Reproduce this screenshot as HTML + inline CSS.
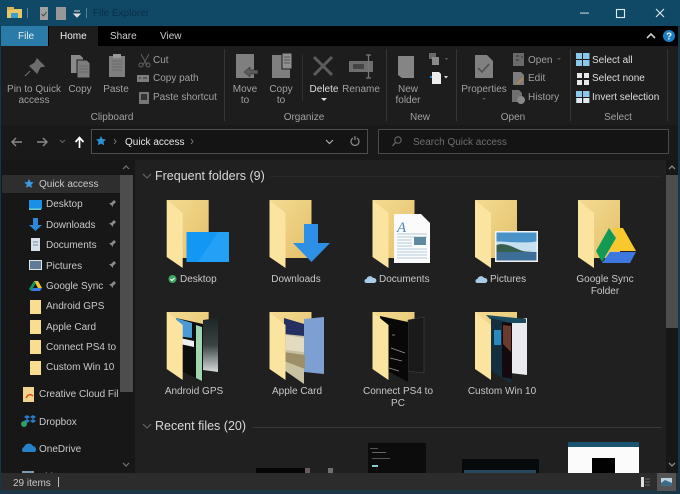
<!DOCTYPE html>
<html><head><meta charset="utf-8"><style>
html,body{margin:0;padding:0;width:680px;height:494px;overflow:hidden;background:#202020}
body{position:relative;font-family:"Liberation Sans",sans-serif;font-size:10px;color:#c8c8c8}
#all{position:absolute;left:0;top:0;width:680px;height:494px;overflow:hidden;filter:blur(.35px)}
.t{position:absolute;white-space:nowrap;line-height:12px;margin-top:1px}
.c{position:absolute;text-align:center;line-height:12px;margin-top:1px}
.h{margin-top:0}
.d{color:#a0a0a0}.w{color:#e8e8e8}
svg{position:absolute;left:0;top:0}
</style></head><body><div id="all">
<svg width="680" height="494" viewBox="0 0 680 494" xmlns="http://www.w3.org/2000/svg">
<defs>
<linearGradient id="bk" x1="0" y1="0" x2="1" y2="1"><stop offset="0" stop-color="#f4db92"/><stop offset="1" stop-color="#e3c06a"/></linearGradient>
<linearGradient id="g1" x1="0" y1="0" x2="0" y2="1"><stop offset="0" stop-color="#1d2626"/><stop offset=".5" stop-color="#3a4242"/><stop offset="1" stop-color="#d6dcdc"/></linearGradient>
<g id="fd"><path d="M0 0H42V58H16Z" fill="url(#bk)"/></g>
<g id="fl"><path d="M0 0L16 13V68L0 57Z" fill="#fbe4a0"/></g>
</defs>
<!-- frames -->
<rect width="680" height="494" fill="#202020"/>
<rect width="680" height="26" fill="#0f4966"/>
<rect y="26" width="680" height="20" fill="#000"/>
<rect x="1" y="26" width="47" height="20" fill="#2a7ba8"/>
<rect x="49" y="26" width="49" height="20" fill="#1d1d1d"/>
<rect y="46" width="680" height="79" fill="#1d1d1d"/>
<rect y="125" width="680" height="35" fill="#191919"/>
<rect y="160" width="135" height="313" fill="#171717"/>
<rect x="135" y="160" width="545" height="313" fill="#202020"/>
<rect y="473" width="680" height="17" fill="#2c2c2c"/>
<rect y="490" width="680" height="4" fill="#1c3644"/>
<rect x="0" y="26" width="1" height="468" fill="#12384c"/>
<rect x="678" y="26" width="2" height="468" fill="#12384c"/>
<!-- title icons -->
<path d="M7 9h15v9H7z" fill="#e9c667"/><path d="M7 7h7v3H7z" fill="#d9b45a"/><path d="M11 13h7v5h-7z" fill="#3aa0c8"/>
<rect x="27" y="8" width="1" height="10" fill="#5a8198"/>
<rect x="40" y="7" width="8" height="13" fill="#a0a0a0"/><path d="M41.500 14l2 2 3-4" stroke="#444" fill="none"/>
<rect x="56" y="7" width="10" height="13" fill="#989898"/>
<path d="M74 11h6M74 14l3 3 3-3z" stroke="#ddd" fill="#ddd"/>
<rect x="86" y="8" width="1" height="10" fill="#5a8198"/>
<!-- window buttons -->
<rect x="580" y="12.500" width="9" height="1.200" fill="#b5c6d0"/>
<rect x="616.500" y="9.500" width="8" height="8" fill="none" stroke="#e2e8ec" stroke-width="1.100"/>
<path d="M656 9l8 8M664 9l-8 8" stroke="#e2e8ec" stroke-width="1.100"/>
<path d="M647 38l4-4 4 4" stroke="#ccc" stroke-width="1.600" fill="none"/>
<circle cx="669" cy="36" r="6" fill="#1e7ec4"/>
<text x="669" y="39.500" text-anchor="middle" font-family="Liberation Sans" font-size="10" font-weight="bold" fill="#e8f2fa">?</text>
<!-- ribbon separators -->
<g fill="#353535"><rect x="224" y="49" width="1" height="72"/><rect x="386" y="49" width="1" height="72"/><rect x="456" y="49" width="1" height="72"/><rect x="570" y="49" width="1" height="72"/><rect x="667" y="49" width="1" height="72"/><rect x="302" y="55" width="1" height="46" fill="#303030"/></g>
<!-- pin -->
<path d="M37 59l7 7-4 1-3 6-7-7 5-3zM30 71l-5 5" fill="#6d6d6d" stroke="#6d6d6d" stroke-width="1.200"/>
<!-- copy -->
<path d="M71 55h9l3 3v15H71z" fill="#8a8a8a"/><path d="M77 60h10l3 3v15H77z" fill="#7d7d7d" stroke="#1d1d1d"/><path d="M79 66h9M79 69h9M79 72h9" stroke="#666"/>
<!-- paste -->
<rect x="109" y="56" width="16" height="21" fill="#7f7f7f"/><rect x="113" y="54" width="8" height="4" fill="#999"/><path d="M112 61h10M112 64h10M112 67h10M112 70h10" stroke="#6a6a6a"/>
<!-- cut etc -->
<path d="M141 54l6 11M149 54l-6 11" stroke="#5d5d5d" stroke-width="1.100"/><circle cx="141" cy="65" r="2" fill="none" stroke="#666"/><circle cx="148" cy="65" r="2" fill="none" stroke="#666"/>
<rect x="137" y="75" width="12" height="7" fill="#7c7c7c"/><path d="M139 78h2M143 78h4" stroke="#333"/>
<rect x="139" y="92" width="10" height="12" fill="#777"/><rect x="141" y="94" width="6" height="6" fill="#333"/>
<!-- move -->
<rect x="236" y="54" width="18" height="24" fill="#7f7f7f"/><path d="M258 70h-8v-3l-6 5 6 5v-3h8z" fill="#5c5c5c" stroke="#1d1d1d" stroke-width=".5"/>
<!-- copy to -->
<rect x="272" y="55" width="18" height="23" fill="#7f7f7f"/><path d="M282 53h10v16h-10z" fill="#909090" stroke="#1d1d1d"/><path d="M284 57h6M284 60h6M284 63h6" stroke="#555"/>
<!-- delete -->
<path d="M314 57l18 18M332 57l-18 18" stroke="#5c5c5c" stroke-width="3"/>
<path d="M321 98h6l-3 3z" fill="#ddd"/>
<!-- rename -->
<rect x="349" y="61" width="24" height="11" fill="#6e6e6e"/><rect x="353" y="64" width="11" height="5" fill="#444"/><path d="M366 55h5M368.500 55v23M366 78h5" stroke="#777" stroke-width="1.300"/>
<!-- new folder -->
<path d="M398 56h16v22h-12l-4-3z" fill="#858585"/>
<path d="M429 53h7v6h-7z" fill="#6a6a6a"/><path d="M432 57h7v8h-7z" fill="#8a8a8a"/><path d="M445 58h3l-1.500 2z" fill="#666"/>
<path d="M432 72h7l2 2v10h-9z" fill="#eee"/><path d="M430 76h2v2h-2z" fill="#2a88c8"/><path d="M444 76h4l-2 2.500z" fill="#ddd"/>
<!-- properties -->
<path d="M475 55h12l6 6v17h-18z" fill="#808080"/><path d="M478 68l4 4 7-8" stroke="#505050" stroke-width="1.600" fill="none"/><path d="M482 98h4l-2 2z" fill="#555"/>
<!-- open/edit/history -->
<rect x="513" y="53" width="11" height="13" fill="#6a6a6a"/><path d="M516 56h3M516 60h3M521 57h2" stroke="#333"/>
<path d="M513 72h8l3 3v10h-11z" fill="#7d7d7d"/><path d="M517 84l6-6" stroke="#c0883c" stroke-width="1.300"/>
<path d="M512 90h7l3 3v9h-10z" fill="#6f6f6f"/><circle cx="521" cy="100" r="4" fill="#888"/>
<path d="M557 58h4l-2 2z" fill="#555"/>
<!-- select -->
<g fill="#8cc8ea"><rect x="576" y="53" width="6" height="6"/><rect x="583" y="53" width="6.500" height="6"/><rect x="576" y="60" width="6" height="6"/><rect x="583" y="60" width="6.500" height="6"/></g>
<g fill="#e8e8e8"><rect x="577" y="73" width="5" height="5"/><rect x="584" y="73" width="5" height="5"/><rect x="577" y="80" width="5" height="5"/><rect x="584" y="80" width="5" height="5"/></g>
<g fill="#8cc8ea"><rect x="583" y="91" width="6.500" height="6"/><rect x="576" y="91" width="6" height="6"/><rect x="583" y="98" width="6.500" height="5" /><rect x="576" y="98" width="6" height="5"/></g>
<rect x="577" y="98" width="5" height="5" fill="#e8e8e8"/><rect x="584" y="98" width="5" height="5" fill="#e8e8e8"/>
<!-- nav -->
<g fill="none" stroke="#8a8a8a" stroke-width="1.400"><path d="M22 142H12M16 138l-4 4 4 4"/><path d="M37 142h10M43 138l4 4-4 4"/></g>
<path d="M60 140l2.500 2.500L65 140" fill="none" stroke="#666"/>
<path d="M79.500 148v-10M75.500 142l4-4.500 4 4.500" fill="none" stroke="#fff" stroke-width="1.700"/>
<rect x="91.500" y="129.500" width="276" height="24" fill="#141414" stroke="#4e4e4e"/>
<path d="M101 136l1.500 3 3.500.5-2.500 2.300.6 3.500-3.100-1.700-3.100 1.700.6-3.500-2.500-2.300 3.500-.5z" fill="#2f8fd0"/>
<path d="M114 139l2 2.500-2 2.500M191 139l2 2.500-2 2.500" fill="none" stroke="#777"/>
<path d="M326 140l3.500 3.500 3.500-3.500" fill="none" stroke="#aaa" stroke-width="1.200"/>
<path d="M353 138a4 4 0 1 0 4 0M355 136v4" fill="none" stroke="#8a8a8a" stroke-width="1.200"/>
<rect x="378.500" y="129.500" width="290" height="24" fill="#141414" stroke="#4a4a4a"/>
<circle cx="398" cy="140" r="3.200" fill="none" stroke="#666" stroke-width="1.100"/><path d="M395.500 142.500l-3 3.500" stroke="#666" stroke-width="1.300"/>
<!-- nav pane -->
<rect x="2" y="175" width="118" height="18" fill="#2e2e2e"/>
<rect x="120" y="175" width="13" height="217" fill="#4d4d4d"/>
<path d="M123 169l3-3 3 3M123 463l3 3 3-3" fill="none" stroke="#777" stroke-width="1.200"/>
<path d="M29 179l1.400 3 3.300.4-2.400 2.200.6 3.300-2.900-1.600-2.900 1.600.6-3.300-2.400-2.200 3.300-.4z" fill="#3a9ae0"/>
<rect x="29" y="200" width="13" height="9" fill="#1a8fe8"/><rect x="29" y="208.500" width="12" height="1.500" fill="#7cc"/>
<path d="M33 218h5v7h4l-6.500 6-6.500-6h4z" fill="#2f86d8"/>
<rect x="31" y="238" width="9" height="13" fill="#d8dfe6"/><path d="M33 242h5M33 245h5" stroke="#6b93b4"/>
<rect x="29" y="260" width="13" height="10" fill="#dfe4e8"/><rect x="30" y="261" width="11" height="8" fill="#5f7d98"/>
<path d="M34 281h4l4 7h-4z" fill="#f4c430"/><path d="M34 281l-5 8 2 2 5-8z" fill="#14965a"/><path d="M31 291h9l2-3h-9z" fill="#3b7ae0"/>
<g fill="#f8dd92"><rect x="30" y="300" width="11" height="14"/><rect x="30" y="320" width="11" height="14"/><rect x="30" y="340" width="11" height="14"/><rect x="30" y="361" width="11" height="14"/></g>
<g fill="#8a8a8a"><path d="M114 200l-3 3-2 0 4 4 0-2 3-3zM109 207l-1 1"/><path d="M114 220l-3 3-2 0 4 4 0-2 3-3z"/><path d="M114 240l-3 3-2 0 4 4 0-2 3-3z"/><path d="M114 261l-3 3-2 0 4 4 0-2 3-3z"/><path d="M114 281l-3 3-2 0 4 4 0-2 3-3z"/></g>
<rect x="23" y="387" width="11" height="15" fill="#f0d490"/><path d="M26 398c2-4 5-4 7-2" stroke="#d8501c" stroke-width="1.500" fill="none"/>
<path d="M24 417l3-2 3 2-3 2zM30 417l3-2 3 2-3 2zM24 421l3-2 3 2-3 2zM30 421l3-2 3 2-3 2z" fill="#2a7cc8"/><circle cx="24" cy="424" r="3" fill="#30a060"/>
<path d="M23 452a3 3 0 0 1 1-5 5 5 0 0 1 9-1 3.500 3.500 0 0 1 2 6z" fill="#2a80c4"/>
<rect x="22" y="471" width="12" height="2" fill="#7a9ab0"/>
<!-- main scrollbar -->
<rect x="666" y="160" width="12" height="313" fill="#171717"/>
<rect x="666" y="175" width="12" height="153" fill="#4d4d4d"/>
<path d="M669 169l3-3 3 3M669 463l3 3 3-3" fill="none" stroke="#888" stroke-width="1.300"/>
<!-- group headers -->
<path d="M143 174l4 4 4-4M143 424l4 4 4-4" fill="none" stroke="#666" stroke-width="1.100"/>
<rect x="270" y="176" width="392" height="1" fill="#2a2a2a"/>
<rect x="252" y="427" width="410" height="1" fill="#383838"/>
<!-- row 1 -->
<g transform="translate(166.700 200)"><use href="#fd"/></g>
<path d="M186.500 232H229V262H186.500z" fill="#1397f5"/><path d="M198 262l20-30h11v30z" fill="#25a0f7"/>
<g transform="translate(166.700 200)"><use href="#fl"/></g>
<g transform="translate(269.500 200)"><use href="#fd"/></g>
<path d="M304 224h14v19h12l-18.500 19-18.500-19h11z" fill="#2e8fe6"/>
<g transform="translate(269.500 200)"><use href="#fl"/></g>
<g transform="translate(372.500 200)"><use href="#fd"/></g>
<path d="M394 214h27l9 9v40h-36z" fill="#fbfbfb"/>
<path d="M397 234h30M397 237h30M397 240h15M397 243h15M397 246h15M397 249h30M397 252h30M397 255h30M397 258h30" stroke="#b5c8da"/>
<rect x="414" y="237" width="12" height="8" fill="#5f8aa0"/>
<text x="397" y="232" font-family="Liberation Serif,serif" font-style="italic" font-size="15" fill="#4d87b8">A</text>
<g transform="translate(372.500 200)"><use href="#fl"/></g>
<g transform="translate(475 200)"><use href="#fd"/></g>
<rect x="495" y="231" width="43" height="31" fill="#f4f4f4"/><rect x="496.500" y="232.500" width="40" height="28" fill="#c6e0f0"/><path d="M496.500 232.500h40v9c-10 2-30 0-40 0z" fill="#4a93c8"/><path d="M496.500 245c8-3 16 2 26 6 6 1 14 1 14 1v8.500h-40z" fill="#36604c"/><rect x="496.500" y="252" width="40" height="8.500" fill="#3d6e98"/>
<g transform="translate(475 200)"><use href="#fl"/></g>
<g transform="translate(578 200)"><use href="#fd"/></g>
<path d="M613 228H623L636 251H622Z" fill="#f9c82e"/><path d="M610 251h13l-9-16z" fill="#f9c82e"/><path d="M609 228L616 238L602 262L596 251Z" fill="#129a55"/><path d="M610 252H636L630 263H602Z" fill="#3d78e0"/>
<g transform="translate(578 200)"><use href="#fl"/></g>
<circle cx="172.500" cy="279" r="4" fill="#3fa766"/><path d="M170.500 279l1.500 1.500 2.500-2.500" fill="none" stroke="#fff"/>
<g fill="#a8cbe8"><path d="M366.500 283a2 2 0 0 1 0-4 3.500 3.500 0 0 1 6.500-1 2.600 2.600 0 0 1 1.500 5z"/><path d="M477.500 283a2 2 0 0 1 0-4 3.500 3.500 0 0 1 6.500-1 2.600 2.600 0 0 1 1.500 5z"/></g>
<!-- row 2 -->
<g transform="translate(166.700 312)"><use href="#fd"/></g>
<path d="M203 320l15-2v54l-15-2z" fill="url(#g1)"/>
<path d="M176 318l27 6v57l-27-12z" fill="#0e0e0e"/><path d="M176 318l16 5 0 15-16-2z" fill="#4a9bd4"/><path d="M180 338l14 3v6l-14-3z" fill="#f0f0f0"/><path d="M196 325l6 2v54l-6-3z" fill="#9fd6b0"/>
<g transform="translate(166.700 312)"><use href="#fl"/></g>
<g transform="translate(269.500 312)"><use href="#fd"/></g>
<path d="M304 319l20-2v57l-20-2z" fill="#7e9fd2"/>
<path d="M284 318l20 6v60l-20-14z" fill="#c8c2a0"/><path d="M284 318l20 6v12l-20-2z" fill="#253060"/><path d="M286 335l18 3v14l-18-2z" fill="#e4dcc0"/><path d="M284 352l21 3v14l-21-8z" fill="#9d9068"/>
<g transform="translate(269.500 312)"><use href="#fl"/></g>
<g transform="translate(372.500 312)"><use href="#fd"/></g>
<path d="M408 320l16-3v56l-16-2z" fill="#1a1a1a" stroke="#444" stroke-width=".6"/>
<path d="M380 316l28 6v60l-22-12z" fill="#080808"/><path d="M392 335h3M391 348l14 5M390 358l12 3M389 368l10 3" stroke="#999" stroke-width=".8"/>
<g transform="translate(372.500 312)"><use href="#fl"/></g>
<g transform="translate(475 312)"><use href="#fd"/></g>
<path d="M510 321l17-3v57l-17-2z" fill="#ebebef"/>
<path d="M486 315l40 4v4l-16 0-20-4z" fill="#1a4a5e"/><path d="M491 318l20 5v60l-20-12z" fill="#143040"/><path d="M502 322l10 1v56l-10-2z" fill="#140a0e"/><path d="M494 330l7 0v15l-7 0z" fill="#2a8ac0"/><path d="M503 325l8 1v26l-8-8z" fill="#6a3a2c"/>
<g transform="translate(475 312)"><use href="#fl"/></g>
<!-- recent thumbs -->
<rect x="256" y="468" width="50" height="5" fill="#060606"/><rect x="305" y="468" width="5" height="5" fill="#6a5a5e"/><rect x="328" y="468" width="5" height="5" fill="#6f6f6f"/>
<rect x="368" y="443" width="58" height="30" fill="#0c0c0c"/><rect x="370" y="448" width="8" height="1" fill="#555"/><rect x="372" y="452" width="14" height="1" fill="#666"/><rect x="372" y="458" width="18" height="1" fill="#555"/><rect x="372" y="465" width="6" height="2" fill="#8cc"/>
<rect x="462" y="459" width="77" height="14" fill="#060a0c"/><rect x="464" y="470" width="72" height="3" fill="#264a5c"/>
<rect x="568" y="442" width="71" height="31" fill="#fbfbfb"/><rect x="568" y="442" width="71" height="5" fill="#1a5470"/><rect x="592" y="458" width="23" height="15" fill="#020202"/>
<!-- status -->
<rect x="58" y="477" width="1" height="10" fill="#bbb"/>
<rect x="641" y="477" width="3" height="10" fill="#ddd"/><path d="M645 479h5M645 482h5M645 485h5" stroke="#666"/>
<rect x="657" y="473" width="19" height="18" fill="#545454"/><rect x="661" y="478" width="11" height="8" fill="#b9d3e2"/><path d="M661 483l4-3 7 3v3h-11z" fill="#3d6c88"/>
</svg>

<div class="t" style="left:93px;top:7px;color:#0c3048">File Explorer</div>
<div class="t" style="left:18px;top:30px;color:#e6f0f6">File</div>
<div class="t" style="left:60px;top:30px;color:#eee">Home</div>
<div class="t" style="left:110px;top:30px;color:#ccc">Share</div>
<div class="t" style="left:160px;top:30px;color:#ccc">View</div>

<div class="c d" style="left:4px;top:83px;width:60px;line-height:11px">Pin to Quick<br>access</div>
<div class="c d" style="left:62px;top:83px;width:36px">Copy</div>
<div class="c d" style="left:98px;top:83px;width:36px">Paste</div>
<div class="t d" style="left:153px;top:54px">Cut</div>
<div class="t d" style="left:153px;top:72px">Copy path</div>
<div class="t d" style="left:153px;top:91px">Paste shortcut</div>
<div class="c d" style="left:82px;top:111px;width:60px">Clipboard</div>
<div class="c d" style="left:225px;top:83px;width:40px;line-height:11px">Move<br>to</div>
<div class="c d" style="left:261px;top:83px;width:40px;line-height:11px">Copy<br>to</div>
<div class="c" style="left:304px;top:83px;width:40px;color:#ddd">Delete</div>
<div class="c d" style="left:341px;top:83px;width:40px">Rename</div>
<div class="c d" style="left:274px;top:111px;width:60px">Organize</div>
<div class="c d" style="left:388px;top:83px;width:40px;line-height:11px">New<br>folder</div>
<div class="c d" style="left:400px;top:111px;width:40px">New</div>
<div class="c d" style="left:458px;top:83px;width:52px">Properties</div>
<div class="t d" style="left:528px;top:54px">Open</div>
<div class="t d" style="left:528px;top:72px">Edit</div>
<div class="t d" style="left:528px;top:91px">History</div>
<div class="c d" style="left:493px;top:111px;width:40px">Open</div>
<div class="t" style="left:592px;top:54px;color:#ddd">Select all</div>
<div class="t" style="left:592px;top:72px;color:#ddd">Select none</div>
<div class="t" style="left:592px;top:91px;color:#ddd">Invert selection</div>
<div class="c d" style="left:598px;top:111px;width:40px">Select</div>

<div class="t w" style="left:125px;top:136px">Quick access</div>
<div class="t" style="left:413px;top:136px;color:#6e6e6e">Search Quick access</div>

<div style="position:absolute;left:0;top:175px;width:119px;height:298px;overflow:hidden">
<div class="t" style="left:39px;top:3px">Quick access</div>
<div class="t" style="left:46px;top:23px">Desktop</div>
<div class="t" style="left:46px;top:44px">Downloads</div>
<div class="t" style="left:46px;top:64px">Documents</div>
<div class="t" style="left:46px;top:85px">Pictures</div>
<div class="t" style="left:46px;top:105px">Google Sync</div>
<div class="t" style="left:46px;top:125px">Android GPS</div>
<div class="t" style="left:46px;top:146px">Apple Card</div>
<div class="t" style="left:46px;top:166px">Connect PS4 to PC</div>
<div class="t" style="left:46px;top:186px">Custom Win 10</div>
<div class="t" style="left:39px;top:213px">Creative Cloud Files</div>
<div class="t" style="left:39px;top:241px">Dropbox</div>
<div class="t" style="left:39px;top:268px">OneDrive</div>
<div class="t" style="left:39px;top:296px">This PC</div>
</div>

<div class="t h" style="left:155px;top:169px;font-size:12.5px;line-height:14px;color:#d8d8d8">Frequent folders (9)</div>
<div class="t h" style="left:155px;top:419px;font-size:12.5px;line-height:14px;color:#d8d8d8">Recent files (20)</div>

<div class="t" style="left:180px;top:273px">Desktop</div>
<div class="c" style="left:266px;top:273px;width:60px">Downloads</div>
<div class="t" style="left:379px;top:273px">Documents</div>
<div class="t" style="left:490px;top:273px">Pictures</div>
<div class="c" style="left:570px;top:273px;width:70px">Google Sync<br>Folder</div>
<div class="c" style="left:157px;top:385px;width:74px">Android GPS</div>
<div class="c" style="left:262px;top:385px;width:70px">Apple Card</div>
<div class="c" style="left:358px;top:385px;width:80px">Connect PS4 to<br>PC</div>
<div class="c" style="left:462px;top:385px;width:80px">Custom Win 10</div>

<div class="t" style="left:13px;top:477px">29 items</div>
</div></body></html>
